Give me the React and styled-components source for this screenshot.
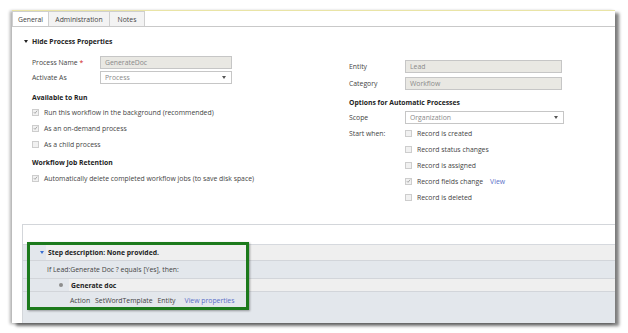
import React from "react";
import styled, { createGlobalStyle } from "styled-components";

const Global = createGlobalStyle`
  html, body { margin: 0; padding: 0; background: #ffffff; }
  body { font-family: "Open Sans", "Noto Sans", sans-serif; }
  * { box-sizing: border-box; }
`;

const Page = styled.div`
  width: 628px;
  height: 333px;
  padding: 10px 0 0 12px;
  background: #fff;
`;

const Frame = styled.div`
  width: 603px;
  height: 313px;
  background: #fff;
  border-top: 1px solid #e9e4a6;
  display: flex;
  flex-direction: column;
  box-shadow: 4px 3px 3px rgba(0, 0, 0, 0.5), -2px 1px 3px rgba(0, 0, 0, 0.32);
  font-size: 6.85px;
  color: #444;
`;

const TabBar = styled.div`
  display: flex;
  height: 16px;
  border-bottom: 1px solid #c9c9c9;
  align-items: stretch;
`;

const Tab = styled.div`
  width: ${(p) => p.w}px;
  display: flex;
  align-items: center;
  justify-content: center;
  border: 1px solid #cfcfcf;
  border-bottom: none;
  margin-left: -1px;
  background: ${(p) => (p.active ? "#fff" : "#f3f3f3")};
  color: #444;
  &:first-child { margin-left: 0; }
`;

const Props = styled.div`
  height: 197px;
  display: flex;
  flex-direction: column;
`;

const SectionHead = styled.div`
  margin-top: 9px;
  height: 10px;
  display: flex;
  align-items: center;
  padding-left: 12px;
  gap: 4px;
  font-weight: 700;
  color: #222;
  font-size: 6.8px;
`;

const Tri = styled.span`
  width: 0;
  height: 0;
  border-left: ${(p) => p.s}px solid transparent;
  border-right: ${(p) => p.s}px solid transparent;
  border-top: ${(p) => p.s + 1}px solid ${(p) => p.c};
`;

const Columns = styled.div`
  display: grid;
  grid-template-columns: 317px 1fr;
  padding-left: 20px;
`;

const Col = styled.div`
  display: flex;
  flex-direction: column;
  padding-top: ${(p) => p.top}px;
`;

const FieldRow = styled.div`
  display: grid;
  grid-template-columns: ${(p) => p.label}px ${(p) => p.input}px;
  align-items: center;
  height: ${(p) => p.h}px;
`;

const Label = styled.span`
  color: #444;
  align-self: ${(p) => (p.top ? "start" : "center")};
  padding-top: ${(p) => (p.top ? 4 : 0)}px;
`;

const Req = styled.span`
  color: #d02020;
  margin-left: 2px;
`;

const Input = styled.div`
  height: 13px;
  border: 1px solid #c6c6c6;
  background: ${(p) => (p.select ? "#fff" : "#e9e8e3")};
  color: #8a8a8a;
  display: flex;
  align-items: center;
  justify-content: space-between;
  padding: 0 5px 0 4px;
`;

const SelArrow = styled.span`
  width: 0;
  height: 0;
  border-left: 2px solid transparent;
  border-right: 2px solid transparent;
  border-top: 3px solid #555;
`;

const Heading = styled.div`
  height: ${(p) => p.h}px;
  margin-top: ${(p) => p.mt || 0}px;
  display: flex;
  align-items: center;
  font-weight: 700;
  color: #222;
  font-size: 6.8px;
`;

const CheckRow = styled.div`
  height: 16px;
  display: flex;
  align-items: center;
  gap: 5px;
  color: #444;
`;

const Box = styled.span`
  width: 7px;
  height: 7px;
  border: 1px solid #cdcdcd;
  background: #f1f1f1;
  display: inline-flex;
  align-items: center;
  justify-content: center;
  flex: none;
`;

const Link = styled.span`
  color: #5b6fc8;
  margin-left: ${(p) => p.ml}px;
`;

const CheckList = styled.div`
  display: flex;
  flex-direction: column;
`;

const StartGrid = styled.div`
  display: grid;
  grid-template-columns: 56px 1fr;
`;

const Tick = () => (
  <svg width="6" height="6" viewBox="0 0 6 6">
    <polyline points="1,3.2 2.4,4.6 5,1.4" fill="none" stroke="#9a9a9a" strokeWidth="1" />
  </svg>
);

const Check = ({ on, children, extra }) => (
  <CheckRow>
    <Box>{on && <Tick />}</Box>
    <span>{children}</span>
    {extra}
  </CheckRow>
);

const Steps = styled.div`
  flex: 1;
  margin-left: 10px;
  border-top: 1px solid #d3d6da;
  border-left: 1px solid #d3d6da;
  display: flex;
  flex-direction: column;
  position: relative;
`;

const StepsTop = styled.div`
  height: 19px;
  background: #fff;
`;

const StepsBody = styled.div`
  flex: 1;
  background: #e3e7ec;
  border-top: 1px solid #d6d9de;
  display: flex;
  flex-direction: column;
`;

const BandRow = styled.div`
  display: flex;
  align-items: stretch;
  height: ${(p) => p.h}px;
  border-bottom: 1px solid #d2d5da;
`;

const Lead = styled.div`
  width: ${(p) => p.w}px;
  display: flex;
  align-items: center;
  justify-content: flex-end;
  padding-right: ${(p) => p.pr}px;
  flex: none;
`;

const Band = styled.div`
  flex: 1;
  background: #efefef;
  display: flex;
  align-items: center;
  padding-left: 2px;
  font-weight: 700;
  color: #222;
  font-size: 6.8px;
`;

const PlainRow = styled.div`
  height: ${(p) => p.h}px;
  display: flex;
  align-items: center;
  padding-left: ${(p) => p.pl}px;
  border-bottom: ${(p) => (p.line ? "1px solid #d2d5da" : "none")};
  color: #444;
  gap: 5px;
`;

const Dot = styled.span`
  width: 4px;
  height: 4px;
  border-radius: 50%;
  background: #8d8d8d;
`;

const Highlight = styled.div`
  position: absolute;
  left: 4px;
  top: 17px;
  width: 222px;
  height: 68px;
  border: 3px solid #1c7a1c;
  box-shadow: 1px 1px 2px rgba(0, 0, 0, 0.35);
  pointer-events: none;
`;

export default function App() {
  return (
    <Page>
      <Global />
      <Frame>
        <TabBar>
          <Tab w={37} active>General</Tab>
          <Tab w={62}>Administration</Tab>
          <Tab w={36}>Notes</Tab>
        </TabBar>
        <Props>
          <SectionHead>
            <Tri s={2.5} c="#222" />
            <span>Hide Process Properties</span>
          </SectionHead>
          <Columns>
            <Col top={9}>
              <FieldRow label={68} input={132} h={15}>
                <Label>Process Name<Req>*</Req></Label>
                <Input>GenerateDoc</Input>
              </FieldRow>
              <FieldRow label={68} input={132} h={15}>
                <Label>Activate As</Label>
                <Input select>Process<SelArrow /></Input>
              </FieldRow>
              <Heading h={14} mt={5}>Available to Run</Heading>
              <Check on>Run this workflow in the background (recommended)</Check>
              <Check on>As an on-demand process</Check>
              <Check>As a child process</Check>
              <Heading h={16} mt={2}>Workflow Job Retention</Heading>
              <Check on>Automatically delete completed workflow jobs (to save disk space)</Check>
            </Col>
            <Col top={12}>
              <FieldRow label={56} input={157} h={17}>
                <Label>Entity</Label>
                <Input>Lead</Input>
              </FieldRow>
              <FieldRow label={56} input={157} h={17}>
                <Label>Category</Label>
                <Input>Workflow</Input>
              </FieldRow>
              <Heading h={14} mt={3}>Options for Automatic Processes</Heading>
              <FieldRow label={56} input={159} h={16}>
                <Label>Scope</Label>
                <Input select>Organization<SelArrow /></Input>
              </FieldRow>
              <StartGrid>
                <Label top>Start when:</Label>
                <CheckList>
                  <Check>Record is created</Check>
                  <Check>Record status changes</Check>
                  <Check>Record is assigned</Check>
                  <Check on extra={<Link ml={2}>View</Link>}>Record fields change</Check>
                  <Check>Record is deleted</Check>
                </CheckList>
              </StartGrid>
            </Col>
          </Columns>
        </Props>
        <Steps>
          <StepsTop />
          <StepsBody>
            <BandRow h={16}>
              <Lead w={23} pr={2}>
                <Tri s={2} c="#3b6fd0" />
              </Lead>
              <Band>Step description: None provided.</Band>
            </BandRow>
            <PlainRow h={18} pl={24} line>If Lead:Generate Doc ? equals [Yes], then:</PlainRow>
            <BandRow h={13}>
              <Lead w={46} pr={6}>
                <Dot />
              </Lead>
              <Band>Generate doc</Band>
            </BandRow>
            <PlainRow h={16} pl={47}>
              <span>Action</span>
              <span>SetWordTemplate</span>
              <span>Entity</span>
              <Link ml={4}>View properties</Link>
            </PlainRow>
          </StepsBody>
          <Highlight />
        </Steps>
      </Frame>
    </Page>
  );
}
